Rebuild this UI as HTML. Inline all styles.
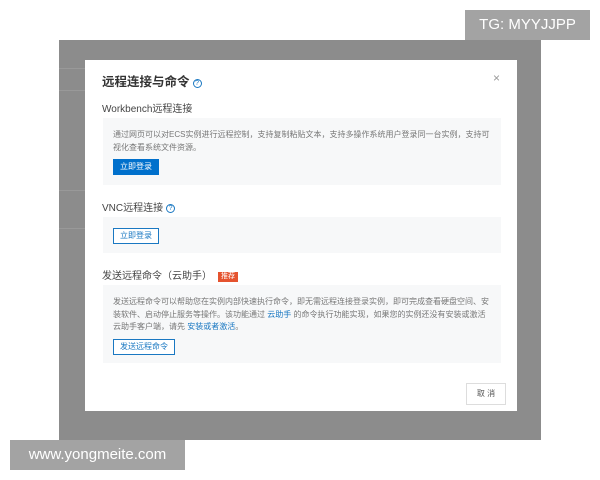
<!DOCTYPE html>
<html><head><meta charset="utf-8"><style>
*{margin:0;padding:0;box-sizing:border-box}
body{width:600px;height:480px;background:#fff;position:relative;overflow:hidden;font-family:"Liberation Sans","Noto Sans CJK SC",sans-serif;}
.ov{position:absolute;left:59px;top:40px;width:482px;height:400px;background:#8c8c8c}
.ln{position:absolute;left:59px;height:1px;background:#999;width:26px}
.tg{position:absolute;left:465px;top:10px;width:125px;height:30px;background:#a3a3a3;color:#fff;font-size:15px;line-height:30px;text-align:center}
.www{position:absolute;left:10px;top:440px;width:175px;height:30px;background:#a3a3a3;color:#fff;font-size:15px;line-height:30px;text-align:center}
.m{position:absolute;left:85px;top:60px;width:432px;height:351px;background:#fff}
.a{position:absolute;white-space:nowrap}
.t{left:17px;top:11px;font-size:12.5px;font-weight:bold;color:#333}
.q{display:inline-block;width:9px;height:9px;border:1px solid #1a78c2;border-radius:50%;font-size:7px;line-height:7px;text-align:center;color:#1a78c2;font-weight:normal;vertical-align:1px;margin-left:3px}
.h{left:17px;font-size:10px;color:#444}
.box{position:absolute;left:18px;width:398px;background:#f7f8f9}
.p{position:absolute;left:10px;font-size:8px;color:#777;line-height:12.5px;width:378px}
.b{position:absolute;left:10px;height:16px;font-size:8px;line-height:14px;text-align:center;border:1px solid #1a78c2;color:#1a78c2;background:#fff}
.lk{color:#1a78c2}
</style></head><body>
<div class="ov"></div>
<div class="ln" style="top:68px"></div><div class="ln" style="top:90px"></div><div class="ln" style="top:190px"></div><div class="ln" style="top:228px"></div>
<div class="tg">TG: MYYJJPP</div>
<div class="www">www.yongmeite.com</div>
<div class="m">
<div class="a t">远程连接与命令<span class="q">?</span></div>
<div class="a" style="left:408px;top:11px;font-size:12px;color:#999">×</div>
<div class="a h" style="top:40px">Workbench远程连接</div>
<div class="box" style="top:58px;height:67px">
<div class="p" style="top:11px">通过网页可以对ECS实例进行远程控制，支持复制粘贴文本，支持多操作系统用户登录同一台实例，支持可视化查看系统文件资源。</div>
<div class="b" style="top:41px;width:46px;background:#0070cc;color:#fff;border-color:#0070cc">立即登录</div>
</div>
<div class="a h" style="top:139px">VNC远程连接<span class="q">?</span></div>
<div class="box" style="top:157px;height:36px">
<div class="b" style="top:11px;width:46px">立即登录</div>
</div>
<div class="a h" style="top:207px">发送远程命令（云助手）<span style="display:inline-block;margin-left:6px;background:#e5532f;color:#fff;font-size:7px;padding:0 3px;line-height:10px;vertical-align:1px">推荐</span></div>
<div class="box" style="top:225px;height:78px">
<div class="p" style="top:11px">发送远程命令可以帮助您在实例内部快速执行命令，即无需远程连接登录实例，即可完成查看硬盘空间、安装软件、启动停止服务等操作。该功能通过 <span class="lk">云助手</span> 的命令执行功能实现，如果您的实例还没有安装或激活云助手客户端，请先 <span class="lk">安装或者激活</span>。</div>
<div class="b" style="top:54px;width:62px">发送远程命令</div>
</div>
<div class="a" style="left:381px;top:323px;width:40px;height:22px;border:1px solid #ddd;font-size:8px;color:#555;line-height:20px;text-align:center">取 消</div>
</div>
</body></html>
